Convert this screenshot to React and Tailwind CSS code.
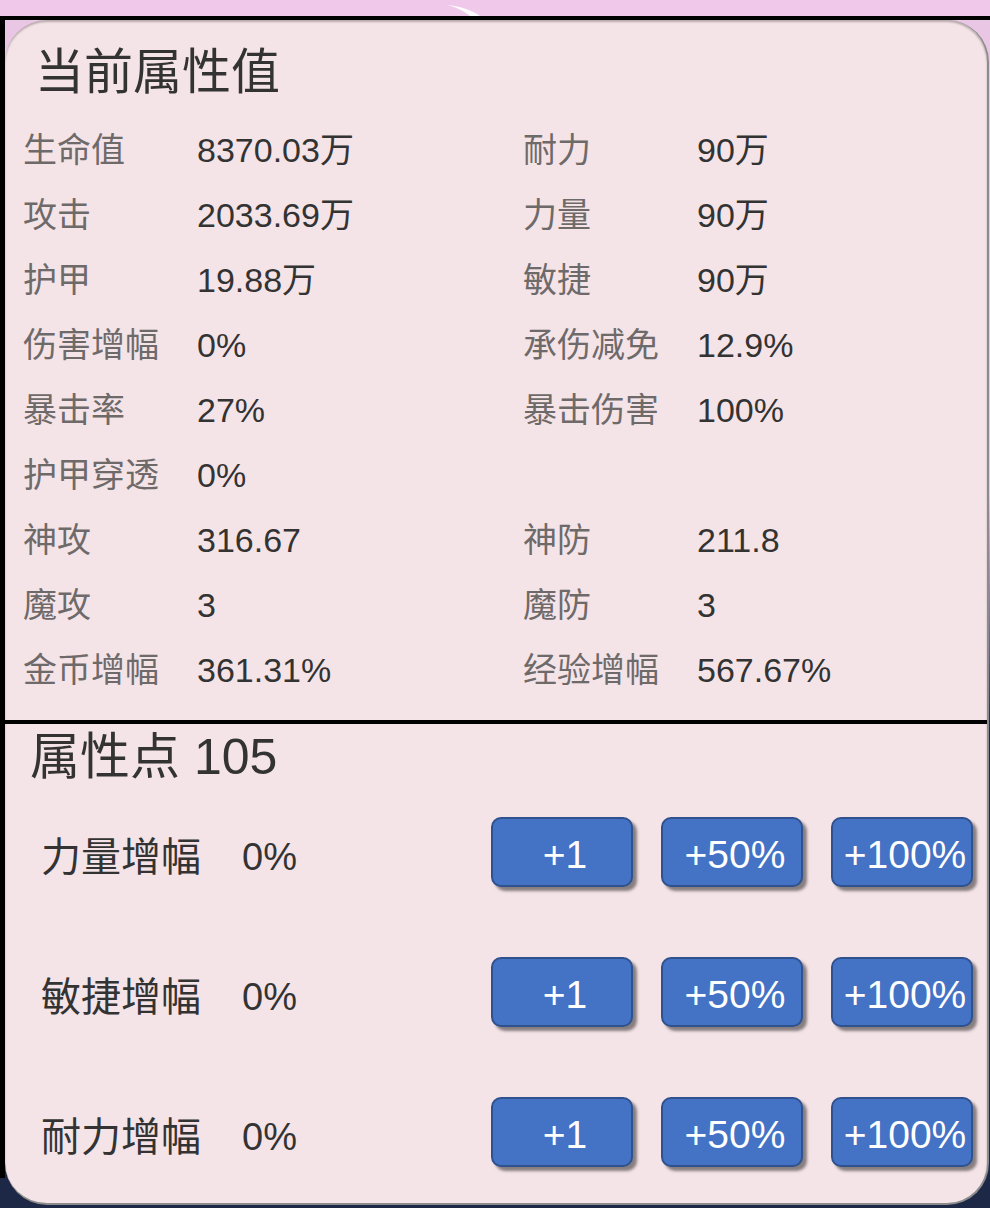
import React from 'react'

const font = { fontFamily: '"Liberation Sans", "Noto Sans CJK SC", sans-serif' }

const stats = [
  ['生命值', '8370.03万', '耐力', '90万'],
  ['攻击', '2033.69万', '力量', '90万'],
  ['护甲', '19.88万', '敏捷', '90万'],
  ['伤害增幅', '0%', '承伤减免', '12.9%'],
  ['暴击率', '27%', '暴击伤害', '100%'],
  ['护甲穿透', '0%', '', ''],
  ['神攻', '316.67', '神防', '211.8'],
  ['魔攻', '3', '魔防', '3'],
  ['金币增幅', '361.31%', '经验增幅', '567.67%'],
]

const boosts = ['力量增幅', '敏捷增幅', '耐力增幅']

function StatRow({ row }) {
  const [l1, v1, l2, v2] = row
  return (
    <div className="flex h-[65px] items-center text-[34px]">
      <span className="w-[174px] text-[#6e6a6a]">{l1}</span>
      <span className="w-[326px] text-[#333]">{v1}</span>
      <span className="w-[174px] text-[#6e6a6a]">{l2}</span>
      <span className="text-[#333]">{v2}</span>
    </div>
  )
}

function AddButton({ children }) {
  return (
    <button className="flex h-[70px] w-[142px] items-center justify-center rounded-[10px] border-2 border-[#2f528f] bg-[#4472c4] pl-[6px] pt-[6px] text-[39px] text-white shadow-[4px_4px_3px_rgba(0,0,0,0.45)]">
      {children}
    </button>
  )
}

export default function App() {
  return (
    <div className="flex h-[1208px] w-[990px] flex-col overflow-hidden bg-[#1d2847]" style={font}>
      {/* 顶部粉色条 */}
      <div className="relative h-[16px] shrink-0 bg-[#efc8ea]">
        <svg className="absolute left-[440px] top-[3px]" width="60" height="14" viewBox="0 0 60 14">
          <path d="M6 2 C20 3 32 7 40 13 L30 13 C24 8 16 4 6 2 Z" fill="#fff" opacity="0.9" />
        </svg>
      </div>
      <div className="h-[4px] shrink-0 bg-black" />

      <div className="flex flex-1 bg-[linear-gradient(to_bottom,#e8c6e4_0%,#e8c6e4_40%,#1d2847_60%,#1d2847_100%)]">
        <div className="mb-[30px] w-[5px] shrink-0 bg-black" />
        <div className="mr-[1px] mb-[3px] flex flex-1 flex-col overflow-hidden rounded-[42px] border-2 border-t-0 border-l-0 border-[#8c8c8c] bg-[#f5e4e7] shadow-[inset_0_2px_2px_rgba(0,0,0,0.25)]">
          {/* 当前属性值 */}
          <section className="pb-[17px] pl-[18px]">
            <h2 className="mt-[23px] flex h-[60px] items-center pl-[12px] text-[49px] text-[#333]">当前属性值</h2>
            <div className="mt-[15px]">
              {stats.map((row) => (
                <StatRow key={row[0]} row={row} />
              ))}
            </div>
          </section>

          <div className="-mr-[4px] h-[4px] bg-black" />

          {/* 属性点 */}
          <section className="flex-1 pl-[25px]">
            <h2 className="flex h-[66px] items-center text-[50px] text-[#333]">属性点 105</h2>
            <div className="mt-[27px] flex flex-col gap-[70px] pr-[14px]">
              {boosts.map((name) => (
                <div key={name} className="flex h-[70px] items-center">
                  <span className="w-[212px] pl-[11px] pt-[10px] text-[40px] text-[#333]">{name}</span>
                  <span className="flex-1 pt-[10px] text-[38px] text-[#333]">0%</span>
                  <div className="flex gap-[28px]">
                    <AddButton>+1</AddButton>
                    <AddButton>+50%</AddButton>
                    <AddButton>+100%</AddButton>
                  </div>
                </div>
              ))}
            </div>
          </section>
        </div>
      </div>
    </div>
  )
}
